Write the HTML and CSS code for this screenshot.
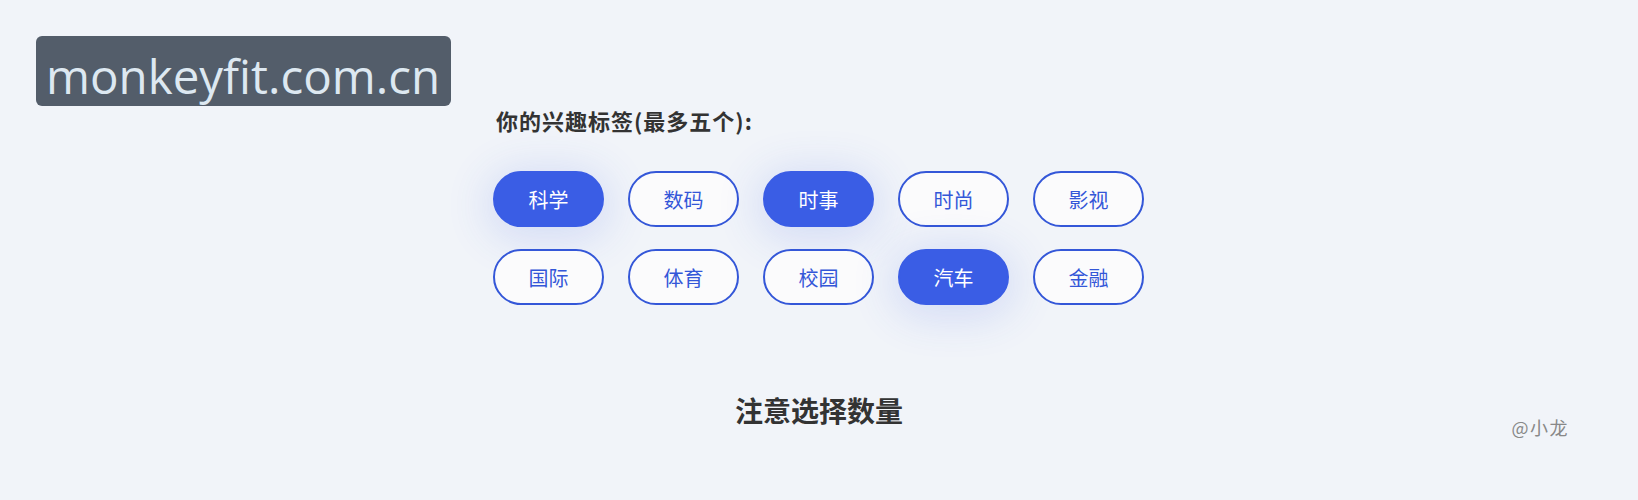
FILE: index.html
```html
<!DOCTYPE html>
<html lang="zh-CN">
  <head>
    <meta charset="UTF-8" />
    <meta name="viewport" content="width=device-width, initial-scale=1.0"/>
    <title>兴趣标签</title>
    <link rel="stylesheet" href="styles.css">
  </head>
  <body>
    <!-- site watermark -->
    <div class="site-mark">monkeyfit.com.cn</div>

    <div class="panel">
      <div class="label">你的兴趣标签(最多五个):</div>

      <div class="tags">
        <button class="tag active">科学</button>
        <button class="tag">数码</button>
        <button class="tag active">时事</button>
        <button class="tag">时尚</button>
        <button class="tag">影视</button>
        <button class="tag">国际</button>
        <button class="tag">体育</button>
        <button class="tag">校园</button>
        <button class="tag active">汽车</button>
        <button class="tag">金融</button>
      </div>

      <div class="title">注意选择数量</div>
    </div>

    <div class="author">@小龙</div>
  </body>
</html>
```

FILE: styles.css
```css
body {
  background-color: #f1f4f9;
  color: #333;
  font-family: "Noto Sans CJK SC", "Noto Sans", sans-serif;
  margin: 0;
  height: 500px;
  position: relative;
  overflow: hidden;
}
.site-mark {
  position: absolute;
  left: 36px;
  top: 36px;
  width: 415px;
  height: 70px;
  box-sizing: border-box;
  background-color: #535d6a;
  color: #dde8f1;
  border-radius: 6px;
  font-family: "Open Sans", sans-serif;
  font-size: 47.5px;
  line-height: 80px;
  padding-left: 10px;
  white-space: nowrap;
}
.panel {
  width: 652px;
  margin: 0 auto;
  padding-top: 104px;
  display: flex;
  flex-direction: column;
}
.label {
  font-size: 22px;
  line-height: 32px;
  font-weight: 600;
  letter-spacing: 1px;
  color: #333;
  padding-left: 3px;
}
.tags {
  display: grid;
  grid-template-columns: repeat(5, 111px);
  column-gap: 24px;
  row-gap: 22px;
  margin-top: 35px;
}
.tag {
  height: 56px;
  border: 2px solid #3457d8;
  border-radius: 28px;
  background-color: #fbfbfc;
  color: #3457d8;
  font-family: "Noto Sans CJK SC", sans-serif;
  font-size: 20px;
  cursor: pointer;
  padding: 0;
}
.tag.active {
  background-color: #3a5de5;
  border-color: #3a5de5;
  color: #fff;
  box-shadow: 0 6px 44px 6px rgba(58, 93, 229, 0.16);
}
.title {
  margin-top: 85px;
  text-align: center;
  font-size: 28px;
  line-height: 40px;
  font-weight: bold;
  color: #333;
}
.author {
  position: absolute;
  right: 69px;
  top: 415px;
  font-size: 18px;
  line-height: 24px;
  letter-spacing: 1.5px;
  color: #888;
}
```
